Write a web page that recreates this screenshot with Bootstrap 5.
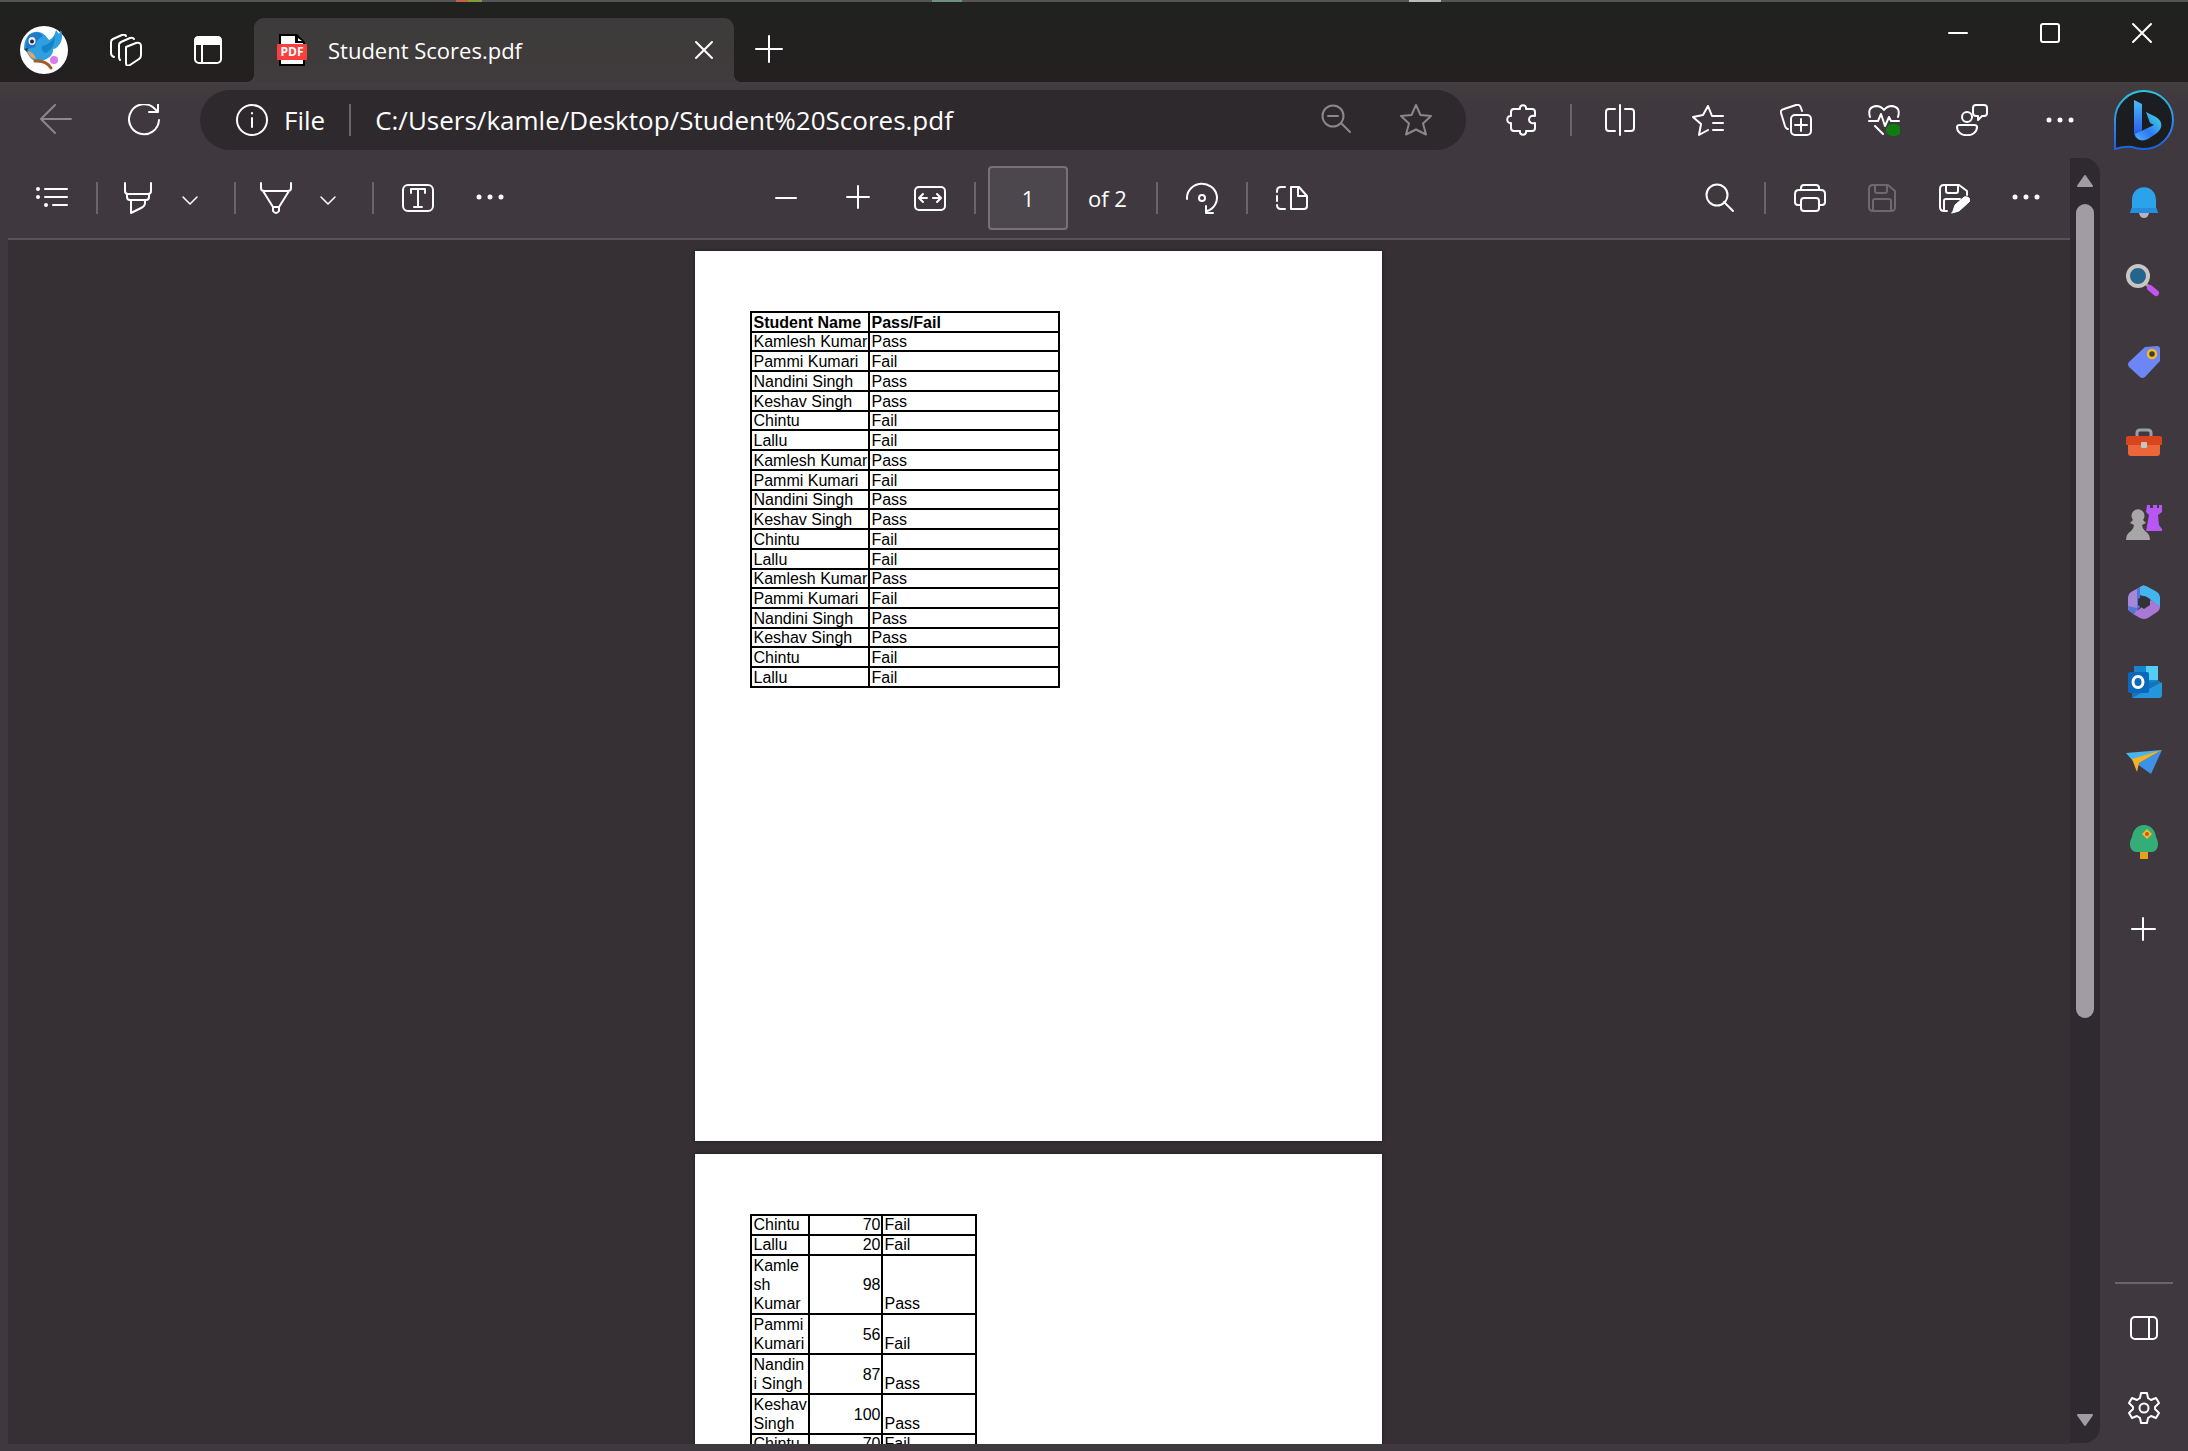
<!DOCTYPE html>
<html lang="en">
<head>
<meta charset="utf-8">
<meta name="viewport" content="width=device-width, initial-scale=1">
<title>Student Scores.pdf</title>
<link href="https://cdn.jsdelivr.net/npm/bootstrap@5.3.0/dist/css/bootstrap.min.css" rel="stylesheet">
<style>
:root{--frame:#3f383e;--dark:#222020;--view:#362f34;--track:#2f2a30;--line:#59545a;--grey:#a19ca3}
body{font-family:"Open Sans","Noto Sans",sans-serif;background:var(--frame);color:#fff;font-size:22px}
.desk-strip{height:2px;background:linear-gradient(90deg,#555 456px,#c65f45 456px 468px,#7f9b3a 468px 482px,#555 482px 932px,#6e8f84 932px 962px,#555 962px 1409px,#bbb 1409px 1441px,#555 1441px)}
.title-bar{height:80px;background:linear-gradient(#20221f,#231f20)}
.tool-btn{width:56px;height:48px;padding:0;border:0;background:none;color:#fff;display:flex;align-items:center;justify-content:center;flex:none}
.tool-btn.pen-btn{width:48px}
.thin-ico svg{stroke-width:1.5}
svg{display:block;flex:none;width:32px;height:32px;fill:none;stroke:currentColor;stroke-width:2;stroke-linecap:round;stroke-linejoin:round}
.dim{color:#8c878b}
.off{color:#6f696f}
.title-tools{padding:16px 18px 0 16px;gap:26px}
.avatar svg{width:48px;height:48px;stroke:none}
.file-tab{width:480px;height:64px;background:linear-gradient(#3d3b3b,#403b3c);border-radius:10px 10px 0 0;padding:0 2px 0 22px}
.file-tab::before,.file-tab::after{content:"";position:absolute;bottom:0;width:8px;height:8px}
.file-tab::before{left:-8px;background:radial-gradient(circle at 0 0,#0000 8px,#403b3c 8px)}
.file-tab::after{right:-8px;background:radial-gradient(circle at 100% 0,#0000 8px,#403b3c 8px)}
.win-btn{width:92px;height:64px}
.nav-row{height:76px;padding:0 12px 0 28px;background:linear-gradient(#423e3e,var(--frame) 24px)}
.address{height:60px;border-radius:30px;background:#2e292d;padding:0 22px 0 20px;margin:0 28px}
.address input{background:none;border:0;outline:0;color:#fff;font-size:26px;min-width:0;padding:0}
.scheme{font-size:26px;color:#fff;background:none;border:0;padding:0}
.rule{width:2px;height:32px;background:#6b656a;flex:none}
.gap-32{gap:32px}
.split-rule{margin:0 20px}
.bing svg{width:64px;height:64px}
.bing{width:64px;height:64px;margin-left:24px}
.left-edge{width:8px}
.pdf-bar{height:82px;border-bottom:2px solid var(--line);padding:0 16px}
.pdf-bar .group{gap:16px}
.pdf-bar .side-group{flex:1 1 0}
.page-box{width:80px;height:64px;background:#4c474d;border:2px solid #777278;border-radius:4px;color:#fff;text-align:center;font-size:22px;margin-left:-4px;padding:0}
.page-count{width:64px;padding-left:20px;white-space:nowrap}
.viewer{background:var(--view);padding:11px 2px 0 0;gap:13px}
.sheet{width:687px;height:890px;flex:none;background:#fff;color:#000;padding:60px 0 0 55px;box-shadow:0 0 3px #1c181b}
.score-grid{border-collapse:collapse;font:16px/17px "Liberation Sans",Arial,sans-serif;table-layout:fixed}
.score-grid td,.score-grid th{border:2px solid #000;padding:0 0 0 2px;white-space:nowrap;vertical-align:bottom}
.first-grid{width:310px;height:377px}
.first-grid .c-name{width:118px}
.second-grid{width:227px}
.second-grid td{line-height:18px}
.second-grid td:first-child{vertical-align:top}
.second-grid td:nth-child(2){text-align:right;vertical-align:middle}
.second-grid .c-name{width:58px}.second-grid .c-mark{width:73px}
.second-grid .tall td{line-height:19px}
.scroll-rail{width:30px;background:var(--track);border-radius:0 16px 16px 0;padding:16px 0;margin-bottom:8px}
.scroll-rail svg{width:18px;height:14px;fill:var(--grey);stroke:var(--grey)}
.thumb{width:18px;border-radius:9px;background:var(--grey);flex:0 0 65%;margin-top:16px}
.side{width:88px;padding:4px 0 3px}
.side .tool-btn{width:88px;height:80px}
.side svg{width:36px;height:36px}
.side .line-ico svg{width:32px;height:32px}
.side .paint svg{stroke:none}
.side-rule{height:2px;width:58px;background:#6b656a;margin:4px 0}
.bottom-edge{height:7px}
</style>
<script src="https://cdn.jsdelivr.net/npm/bootstrap@5.3.0/dist/js/bootstrap.bundle.min.js"></script>
</head>
<body class="vh-100 d-flex flex-column overflow-hidden">
<div class="desk-strip flex-shrink-0"></div>

<header class="title-bar d-flex flex-shrink-0">
  <div class="title-tools d-flex align-items-center">
    <button class="tool-btn avatar" aria-label="Profile"><svg viewBox="0 0 48 48"><circle cx="24" cy="24" r="24" fill="#fff"/><path d="M36 4l3 4 2-4q3 9-2 15-3 4-6 4c1 6-6 11-12 12-8 2-12-4-14-9L4 23c0-8 3-16 11-17 7-1 10 3 14 8q5-2 7-10z" fill="#2e9fe0"/><path d="M9 9q8-6 14 1-6 2-8 11-7 2-9 2-1-8 3-14" fill="#2279c8"/><path d="M22 20q8-1 13-10 0 12-9 17-5-1-4-7z" fill="#1583c8"/><path d="M8 25q6 1 8 8-7-1-8-8" fill="#f5a04b"/><path d="M8 22l-4 1 3 3z" fill="#333"/><ellipse cx="12" cy="15" rx="3.500" ry="4" fill="#eef"/><circle cx="12" cy="15.500" r="2" fill="#24272e"/><path d="M15 35q11-1 16 7" stroke="#a25c25" stroke-width="3" fill="none"/><circle cx="34" cy="34" r="4" fill="#d87af0"/></svg></button>
    <button class="tool-btn" aria-label="Workspaces"><svg viewBox="0 0 32 32"><path d="M16 13l10-4q5-1 5 3v9q0 3-2 4l-9 6q-4 2-4-2zM10 26q-1-1-1-3V11q0-2 2-3l9-4q3-1 4 1M4 23q-3-1-3-4V8q0-2 2-3l9-4q3-1 4 1"/></svg></button>
    <button class="tool-btn" aria-label="Tab actions"><svg viewBox="0 0 32 32"><rect x="3" y="3" width="26" height="26" rx="4"/><path d="M3 10V7q0-4 4-4h18q4 0 4 4v3z" fill="currentColor"/><path d="M10 10v18"/></svg></button>
  </div>
  <div class="file-tab d-flex align-items-center position-relative align-self-end">
    <svg viewBox="0 0 32 32"><path d="M3 0h18l8 8v24H3z" fill="#000" stroke="none"/><path d="M5 2h14v7h8v21H5z" fill="#fff" stroke="none"/><path d="M22 4v3h4z" fill="#fff" stroke="none"/><rect x="1" y="10" width="30" height="16" rx="1" fill="#f8403e" stroke="none"/><text x="16" y="22" text-anchor="middle" font-size="12" font-weight="700" fill="#fff" stroke="none">PDF</text></svg>
    <span class="flex-grow-1 ps-3 ms-1">Student Scores.pdf</span>
    <button class="tool-btn" aria-label="Close tab"><svg viewBox="0 0 32 32"><path d="M8 8l16 16M24 8L8 24"/></svg></button>
  </div>
  <div class="d-flex align-items-center pt-3 ps-2 flex-grow-1">
    <button class="tool-btn" aria-label="New tab"><svg viewBox="0 0 32 32"><path d="M2 15h26M15 2v26"/></svg></button>
  </div>
  <div class="d-flex">
    <button class="tool-btn win-btn" aria-label="Minimise"><svg viewBox="0 0 32 32"><path d="M7 15h18"/></svg></button>
    <button class="tool-btn win-btn" aria-label="Maximise"><svg viewBox="0 0 32 32"><rect x="7" y="6" width="18" height="18" rx="2"/></svg></button>
    <button class="tool-btn win-btn" aria-label="Close"><svg viewBox="0 0 32 32"><path d="M7 6l18 18M25 6L7 24"/></svg></button>
  </div>
</header>

<nav class="nav-row d-flex align-items-center flex-shrink-0" aria-label="Browser">
  <div class="d-flex gap-32">
    <button class="tool-btn dim" aria-label="Back"><svg viewBox="0 0 32 32"><path d="M31 15H1M15 1L1 15l14 14"/></svg></button>
    <button class="tool-btn" aria-label="Refresh"><svg viewBox="0 0 32 32"><path d="M31 16a15 15 0 1 1-4-11l3 3M30 0v8h-9"/></svg></button>
  </div>
  <div class="address d-flex align-items-center flex-grow-1">
    <button class="scheme d-flex align-items-center" aria-label="Site information"><span class="ms-3 me-3"><svg viewBox="0 0 32 32"><circle cx="16" cy="16" r="15"/><path d="M16 14v9M16 9v.5"/></svg></span>File</button>
    <div class="rule ms-4 me-4"></div>
    <input class="flex-grow-1" type="text" aria-label="Address" value="C:/Users/kamle/Desktop/Student%20Scores.pdf">
    <div class="d-flex gap-4">
      <button class="tool-btn dim" aria-label="Zoom out"><svg viewBox="0 0 32 32"><circle cx="13" cy="12" r="10.500"/><path d="M8 12h10M21 19l9 9"/></svg></button>
      <button class="tool-btn dim" aria-label="Favourite"><svg viewBox="0 0 32 32"><path d="M16 1l4.500 10 10.500 1-8 7.500 3 11-10-5-10 5 3-11-8-7.500 10.500-1z"/></svg></button>
    </div>
  </div>
  <button class="tool-btn" aria-label="Extensions"><svg viewBox="0 0 32 32"><path d="M14 5c-1-5 7-5 6 0h6q3 0 3 3v4c-8-2-8 9 0 7v5q0 3-3 3h-6c1 5-7 5-6 0H8q-3 0-3-3v-5c-5 1-5-8 0-7V8q0-3 3-3z"/></svg></button>
  <div class="rule split-rule"></div>
  <div class="d-flex gap-32">
    <button class="tool-btn" aria-label="Split screen"><svg viewBox="0 0 32 32"><path d="M16 1v30M11 5H5q-3 0-3 3v16q0 3 3 3h6M21 5h6q3 0 3 3v16q0 3-3 3h-6"/></svg></button>
    <button class="tool-btn" aria-label="Favourites"><svg viewBox="0 0 32 32"><path d="M31 12H20L16 2l-5 9-10 2 8 7-2 11 9-5M21 19h10M21 26h10"/></svg></button>
    <button class="tool-btn" aria-label="Collections"><svg viewBox="0 0 32 32"><rect x="11" y="11" width="20" height="20" rx="4"/><path d="M21 15v12M15 21h12M8 25q-2 0-3-3L1 9q-1-3 3-4l12-4q4-1 5 3l1 3"/></svg></button>
    <button class="tool-btn" aria-label="Browser essentials"><svg viewBox="0 0 32 32"><path d="M2 13Q-1 3 8 2q5 0 8 4 3-4 8-4 9 1 6 11M1 17h9l3-7 4 12 4-9 2 4h8M7 22l8 8"/><rect x="18" y="20" width="15" height="12" rx="6" fill="#107c10" stroke="none"/></svg></button>
    <button class="tool-btn" aria-label="Feedback"><svg viewBox="0 0 32 32"><circle cx="11" cy="13" r="5"/><path d="M4 21h14q3 0 3 2c0 11-20 11-20 0q0-2 3-2M20 1h8q3 0 3 3v5q0 3-3 3h-2l-4 4v-4h-2q-3 0-3-3V4q0-3 3-3"/></svg></button>
    <button class="tool-btn" aria-label="Settings and more"><svg viewBox="0 0 32 32"><g fill="currentColor" stroke="none"><circle cx="5" cy="16" r="2.500"/><circle cx="16" cy="16" r="2.500"/><circle cx="27" cy="16" r="2.500"/></g></svg></button>
  </div>
  <button class="tool-btn bing" aria-label="Bing chat"><svg viewBox="0 0 64 64"><defs><linearGradient id="ring" x1="0" y1="0" x2="0" y2="1"><stop stop-color="#2cc5dd"/><stop offset=".5" stop-color="#2b90ec"/><stop offset="1" stop-color="#1c62dd"/></linearGradient><linearGradient id="bar" x1="0" y1="0" x2="0" y2="1"><stop stop-color="#4bbcfb"/><stop offset="1" stop-color="#2450e6"/></linearGradient><linearGradient id="hook" x1="1" y1="0" x2="0" y2="1"><stop stop-color="#45e0df"/><stop offset=".6" stop-color="#2b7af5"/><stop offset="1" stop-color="#54b3ff"/></linearGradient></defs><path d="M3 61V31A29 29 0 1 1 32 61q-7 0-12-2-7-1-17 2z" fill="#1c1d20" stroke="url(#ring)"/><path d="M22 12l8 4v26l-6 8-2-4z" fill="url(#bar)" stroke="none"/><path d="M34 24l10 5c8 5 6 12 1 16l-9 6c-6 3-12 1-13-5l19-9-4-2z" fill="url(#hook)" stroke="none"/></svg></button>
</nav>

<div class="d-flex flex-grow-1 overflow-hidden">
  <div class="left-edge"></div>
  <main class="d-flex flex-column flex-grow-1 overflow-hidden">
    <div class="pdf-bar d-flex align-items-center flex-shrink-0">
      <div class="group side-group d-flex align-items-center">
        <button class="tool-btn" aria-label="Contents"><svg viewBox="0 0 32 32"><g fill="currentColor" stroke="none"><circle cx="2" cy="7" r="2"/><circle cx="2" cy="15" r="2"/><circle cx="10" cy="23" r="2"/></g><path d="M9 7h22M9 15h22M17 23h14"/></svg></button>
        <div class="rule"></div>
        <div class="d-flex">
          <button class="tool-btn pen-btn" aria-label="Highlight"><svg viewBox="0 0 32 32"><path d="M3 1v8q0 3 3 3h20q3 0 3-3V1M5 12v3q0 3 3 3h16q3 0 3-3v-3M9 18v13l10-5q4-2 4-5v-3"/></svg></button>
          <button class="tool-btn thin-ico" aria-label="Highlight colours"><svg viewBox="0 0 32 32"><path d="M9 15l7 7 7-7"/></svg></button>
        </div>
        <div class="rule"></div>
        <div class="d-flex">
          <button class="tool-btn pen-btn" aria-label="Draw"><svg viewBox="0 0 32 32"><path d="M1 1v5q0 3 3 3h24q3 0 3-3V1M3 9l10 16v4q3 4 6 0v-4L29 9M13 25h6"/></svg></button>
          <button class="tool-btn thin-ico" aria-label="Draw properties"><svg viewBox="0 0 32 32"><path d="M9 15l7 7 7-7"/></svg></button>
        </div>
        <div class="rule"></div>
        <button class="tool-btn" aria-label="Add text"><svg viewBox="0 0 32 32"><rect x="1" y="3" width="30" height="26" rx="5"/><path d="M9 11V7h14v4M16 7v18M12 25h8"/></svg></button>
        <button class="tool-btn" aria-label="More tools"><svg viewBox="0 0 32 32"><g fill="currentColor" stroke="none"><circle cx="5" cy="15" r="2.500"/><circle cx="16" cy="15" r="2.500"/><circle cx="27" cy="15" r="2.500"/></g></svg></button>
      </div>
      <div class="group d-flex align-items-center">
        <button class="tool-btn" aria-label="Zoom out page"><svg viewBox="0 0 32 32"><path d="M6 16h20"/></svg></button>
        <button class="tool-btn" aria-label="Zoom in page"><svg viewBox="0 0 32 32"><path d="M5 15h22M16 4v22"/></svg></button>
        <button class="tool-btn" aria-label="Fit to width"><svg viewBox="0 0 32 32"><rect x="1" y="5" width="30" height="23" rx="4"/><path d="M13 16H6M9 12l-4 4 4 4M19 16h7M23 12l4 4-4 4"/></svg></button>
        <div class="rule"></div>
        <div class="d-flex align-items-center">
          <input class="page-box" id="page-no" type="text" value="1">
          <label class="page-count" for="page-no">of 2</label>
        </div>
        <div class="rule ms-2"></div>
        <button class="tool-btn" aria-label="Rotate"><svg viewBox="0 0 32 32"><circle cx="16" cy="16" r="3"/><path d="M1 17V15a15 14 0 1 1 20 14M27 31h-7v-7"/></svg></button>
        <div class="rule"></div>
        <button class="tool-btn" aria-label="Page view"><svg viewBox="0 0 32 32"><path d="M15 5h8l8 9v10q0 3-3 3H15zM22 5v9h9M9 5H5Q1 5 1 9v1M1 14v5M1 23q0 4 4 4h4"/></svg></button>
      </div>
      <div class="group side-group d-flex align-items-center justify-content-end">
        <button class="tool-btn" aria-label="Find"><svg viewBox="0 0 32 32"><circle cx="13" cy="13" r="10.500"/><path d="M20 20l9 9"/></svg></button>
        <div class="rule"></div>
        <button class="tool-btn" aria-label="Print"><svg viewBox="0 0 32 32"><rect x="7" y="16" width="18" height="13" rx="3"/><path d="M7 23H4q-3 0-3-3v-8q0-4 4-4h22q4 0 4 4v8q0 3-3 3h-3M7 8V6q0-3 3-3h12q3 0 3 3v2"/></svg></button>
        <button class="tool-btn off" aria-label="Save" disabled><svg viewBox="0 0 32 32"><path d="M7 3h15l7 6v16q0 4-4 4H7q-4 0-4-4V7q0-4 4-4M7 29V19q0-2 2-2h14q2 0 2 2v10M9 3v6q0 2 2 2h8q2 0 2-2V3"/></svg></button>
        <button class="tool-btn" aria-label="Save as"><svg viewBox="0 0 32 32"><path d="M9 29H6q-4 0-4-4V7q0-4 4-4h15l8 6v4M6 29V19q0-2 2-2h14M8 3v6q0 2 2 2h8q2 0 2-2V3"/><path d="M15 29l2-6 9-8q3-1 5 1t0 4l-10 9-7 2z" fill="currentColor" stroke-width="1"/></svg></button>
        <button class="tool-btn" aria-label="More"><svg viewBox="0 0 32 32"><g fill="currentColor" stroke="none"><circle cx="5" cy="15" r="2.500"/><circle cx="16" cy="15" r="2.500"/><circle cx="27" cy="15" r="2.500"/></g></svg></button>
      </div>
    </div>

    <div class="viewer d-flex flex-column align-items-center flex-grow-1 overflow-hidden">
      <section class="sheet" aria-label="Page 1">
        <table class="score-grid first-grid">
          <colgroup><col class="c-name"><col></colgroup>
          <tr><th>Student Name</th><th>Pass/Fail</th></tr>
          <tr><td>Kamlesh Kumar</td><td>Pass</td></tr>
          <tr><td>Pammi Kumari</td><td>Fail</td></tr>
          <tr><td>Nandini Singh</td><td>Pass</td></tr>
          <tr><td>Keshav Singh</td><td>Pass</td></tr>
          <tr><td>Chintu</td><td>Fail</td></tr>
          <tr><td>Lallu</td><td>Fail</td></tr>
          <tr><td>Kamlesh Kumar</td><td>Pass</td></tr>
          <tr><td>Pammi Kumari</td><td>Fail</td></tr>
          <tr><td>Nandini Singh</td><td>Pass</td></tr>
          <tr><td>Keshav Singh</td><td>Pass</td></tr>
          <tr><td>Chintu</td><td>Fail</td></tr>
          <tr><td>Lallu</td><td>Fail</td></tr>
          <tr><td>Kamlesh Kumar</td><td>Pass</td></tr>
          <tr><td>Pammi Kumari</td><td>Fail</td></tr>
          <tr><td>Nandini Singh</td><td>Pass</td></tr>
          <tr><td>Keshav Singh</td><td>Pass</td></tr>
          <tr><td>Chintu</td><td>Fail</td></tr>
          <tr><td>Lallu</td><td>Fail</td></tr>
        </table>
      </section>
      <section class="sheet" aria-label="Page 2">
        <table class="score-grid second-grid">
          <colgroup><col class="c-name"><col class="c-mark"><col></colgroup>
          <tr><td>Chintu</td><td>70</td><td>Fail</td></tr>
          <tr><td>Lallu</td><td>20</td><td>Fail</td></tr>
          <tr class="tall"><td>Kamle<br>sh<br>Kumar</td><td>98</td><td>Pass</td></tr>
          <tr class="tall"><td>Pammi<br>Kumari</td><td>56</td><td>Fail</td></tr>
          <tr class="tall"><td>Nandin<br>i Singh</td><td>87</td><td>Pass</td></tr>
          <tr class="tall"><td>Keshav<br>Singh</td><td>100</td><td>Pass</td></tr>
          <tr><td>Chintu</td><td>70</td><td>Fail</td></tr>
        </table>
      </section>
    </div>
    <div class="bottom-edge flex-shrink-0"></div>
  </main>

  <div class="scroll-rail d-flex flex-column align-items-center flex-shrink-0" aria-hidden="true">
    <svg viewBox="0 0 18 14"><path d="M9 2l7 10H2z"/></svg>
    <div class="thumb"></div>
    <svg class="mt-auto" viewBox="0 0 18 14"><path d="M9 12L2 2h14z"/></svg>
  </div>

  <aside class="side d-flex flex-column align-items-center flex-shrink-0">
    <button class="tool-btn paint" aria-label="Notifications"><svg viewBox="0 0 36 36"><path d="M13 29h10q-1 5-5 5t-5-5" fill="#b9b5b7"/><path d="M4 29l2-6v-7C6-1 30-1 30 16v7l2 6z" fill="#2aa3ea"/><path d="M4 29l2-5h24l2 5z" fill="#238ee0"/></svg></button>
    <button class="tool-btn paint" aria-label="Search"><svg viewBox="0 0 36 36"><path d="M19 19l5 5" stroke="#999" stroke-width="3"/><path d="M24 24l6 5" stroke="#c653f1" stroke-width="6"/><circle cx="12" cy="12" r="10" fill="#23658b" stroke="#c9c5c2" stroke-width="4"/></svg></button>
    <button class="tool-btn paint" aria-label="Shopping"><svg viewBox="0 0 36 36"><path d="M19 3l12-1q3 0 3 3v12L19 33q-3 2-5 0L3 23q-2-3 0-5z" fill="#6d86f5"/><circle cx="26" cy="10" r="4" fill="#433a35" stroke="#f3bb22" stroke-width="2.500"/></svg></button>
    <button class="tool-btn paint" aria-label="Tools"><svg viewBox="0 0 36 36"><path d="M11 12V9q0-3 3-3h8q3 0 3 3v3" stroke="#999da2" stroke-width="3" fill="none"/><path d="M2 20h32v9q0 3-3 3H5q-3 0-3-3z" fill="#ed663b"/><path d="M0 14q0-2 2-2h32q2 0 2 2v7H0z" fill="#d9431e"/><rect x="15" y="18" width="6" height="6" rx="1" fill="#bfc8c1"/></svg></button>
    <button class="tool-btn paint" aria-label="Games"><svg viewBox="0 0 36 36"><path d="M21 1h3v3h3V1h4v3h2V1h3v7l-4 3 1 10 3 4v2H20l3-16-3-3z" fill="#b757f5"/><path d="M0 36q0-6 5-9 3-3 3-6l-4-2 3-3a6.500 6.500 0 1 1 10 0l3 3-4 2q0 3 3 6 5 3 5 9z" fill="#a9a6a7"/></svg></button>
    <button class="tool-btn paint" aria-label="Microsoft 365"><svg viewBox="0 0 36 36"><path d="M18 1L5 8q-3 2-3 5v13l9 3 3-19z" fill="#a589d8"/><path d="M14 3q4-3 8 0l9 5q3 2 3 5v10L21 13l-7-2z" fill="#45b5ed"/><path d="M34 22q0 4-3 6l-9 6q-4 2-8 0l-7-4 18-14z" fill="#a879d4"/><path d="M14 3v20L7 30l-4-3q-1-2-1-5l9 2V5z" fill="#5574d7"/><path d="M18 12l6 3v6l-6 4-6-4v-6z" fill="#33303a"/></svg></button>
    <button class="tool-btn paint" aria-label="Outlook"><svg viewBox="0 0 36 36"><rect x="8" y="2" width="24" height="17" fill="#1684cf"/><path d="M20 2h12v14H20z" fill="#54cdf4"/><path d="M6 21l28-4v14q0 3-3 3H6z" fill="#1673b8"/><path d="M6 34l30-16v13q0 3-3 3z" fill="#2497dc"/><rect x="2" y="8" width="21" height="21" rx="2" fill="#0b68bc"/><ellipse cx="12" cy="18" rx="5" ry="5.500" fill="none" stroke="#fff" stroke-width="3"/></svg></button>
    <button class="tool-btn paint" aria-label="Drop"><svg viewBox="0 0 36 36"><path d="M0 9l36-3L7 17z" fill="#48b5ef"/><path d="M36 6L25 30 11 20z" fill="#3c91ea"/><path d="M6 15L36 6 13 19l-2 9z" fill="#f4b321"/></svg></button>
    <button class="tool-btn paint" aria-label="Tree"><svg viewBox="0 0 36 36"><rect x="14" y="24" width="8" height="11" fill="#e8a11c"/><path d="M18 1c7 0 11 5 12 12 4 7 2 15-5 15H11c-7 0-9-8-5-15C7 6 11 1 18 1" fill="#35ad79"/><path d="M21 5l5 5-5 5-5-5z" fill="#f2bd26"/><circle cx="21" cy="10" r="2" fill="#dc4a20"/></svg></button>
    <button class="tool-btn line-ico mt-2" aria-label="Customise sidebar"><svg viewBox="0 0 32 32"><path d="M4 15h23M15 4v22"/></svg></button>
    <div class="side-rule mt-auto"></div>
    <button class="tool-btn line-ico" aria-label="Hide sidebar"><svg viewBox="0 0 32 32"><rect x="3" y="5" width="26" height="22" rx="4"/><path d="M21 5v22"/></svg></button>
    <button class="tool-btn line-ico" aria-label="Settings"><svg viewBox="0 0 32 32"><circle cx="16" cy="16" r="4.500"/><path d="M13 1h6l1 5 3 2 5-2 3 5-4 4v2l4 4-3 5-5-2-3 2-1 5h-6l-1-5-3-2-5 2-3-5 4-4v-2l-4-4 3-5 5 2 3-2z"/></svg></button>
  </aside>
</div>
</body>
</html>
